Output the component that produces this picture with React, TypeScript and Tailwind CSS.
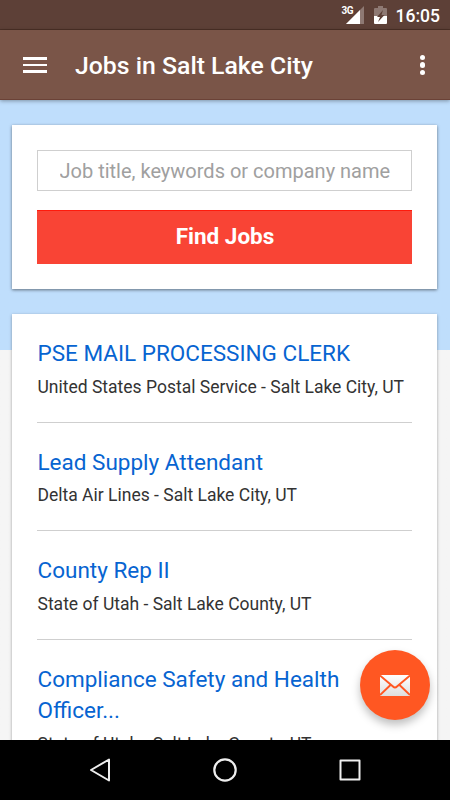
import { useState } from "react";

type Job = {
  title: string;
  company: string;
  location: string;
};

const jobs: Job[] = [
  { title: "PSE MAIL PROCESSING CLERK", company: "United States Postal Service", location: "Salt Lake City, UT" },
  { title: "Lead Supply Attendant", company: "Delta Air Lines", location: "Salt Lake City, UT" },
  { title: "County Rep II", company: "State of Utah", location: "Salt Lake County, UT" },
  { title: "Compliance Safety and Health Officer...", company: "State of Utah", location: "Salt Lake County, UT" },
];

function StatusBar() {
  return (
    <div className="flex h-[30px] shrink-0 items-center justify-end bg-[#5d4037] pr-[10px] text-white shadow-[inset_0_-1px_0_#4c3127]">
      <span className="mb-[8px] text-[10px] leading-none font-bold tracking-tighter">3G</span>
      <svg width="18" height="18" viewBox="0 0 18 18" className="-ml-[7.500px]">
        <path d="M18 0V18H0Z" fill="#fff" opacity="0.3" />
        <path d="M14 4V18H0Z" fill="#fff" />
      </svg>
      <svg width="13" height="18" viewBox="0 0 13 18" className="ml-[10px]">
        <path d="M4 0H9V2H12Q13 2 13 3V10H0V3Q0 2 1 2H4Z" fill="#fff" opacity="0.3" />
        <path d="M0 10H13V17Q13 18 12 18H1Q0 18 0 17Z" fill="#fff" />
        <path d="M9 4L3 11H6L4 16L10.500 9H7.500Z" fill="#5d4037" />
      </svg>
      <span className="ml-[9px] pt-[3px] text-[17.500px] leading-none font-medium">16:05</span>
    </div>
  );
}

function Header() {
  return (
    <header className="z-10 flex h-[70px] shrink-0 items-center bg-[#7a5548] pr-[25px] pl-[23px] text-white shadow-[inset_0_-1px_0_#6b4237,0_1px_4px_rgba(0,0,0,0.35)]">
      <button type="button" aria-label="Menu" className="flex w-6 flex-col gap-1">
        <span className="h-[2.500px] bg-white" />
        <span className="h-[2.500px] bg-white" />
        <span className="h-[2.500px] bg-white" />
      </button>
      <h1 className="ml-[28px] flex-1 pt-[2px] text-[24.800px] leading-none font-medium whitespace-nowrap">Jobs in Salt Lake City</h1>
      <button type="button" aria-label="More" className="flex flex-col gap-[2px]">
        <span className="size-[5.500px] rounded-full bg-white" />
        <span className="size-[5.500px] rounded-full bg-white" />
        <span className="size-[5.500px] rounded-full bg-white" />
      </button>
    </header>
  );
}

function SearchCard() {
  const [query, setQuery] = useState("");

  return (
    <form
      onSubmit={(e) => e.preventDefault()}
      className="flex h-[164px] flex-col bg-white px-[25px] pt-[25px] shadow-[0_1px_3px_rgba(0,0,0,0.5)]"
    >
      <input
        value={query}
        onChange={(e) => setQuery(e.target.value)}
        placeholder="Job title, keywords or company name"
        className="h-[41px] w-full border border-[#cfcfcf] pr-[18px] pl-[21.500px] text-[20px] text-[#333] outline-none placeholder:text-[#a0a0a0]"
      />
      <button type="submit" className="mt-[19px] h-[54px] w-full bg-[#f94435] pl-px text-[22.500px] font-bold text-white shadow-[inset_0_1px_0_#ff1a0c]">
        Find Jobs
      </button>
    </form>
  );
}

function JobRow({ job }: { job: Job }) {
  return (
    <li className="border-b border-[#cfcfcf] pt-6 pb-[21px]">
      <h2 className="pl-[0.500px] text-[22.500px] leading-[31.300px] text-[#0764d1]">{job.title}</h2>
      <p className="mt-[5.300px] mb-[0.500px] pl-[0.500px] text-[17.500px] leading-[25.500px] whitespace-nowrap text-[#333]">
        {job.company} - {job.location}
      </p>
    </li>
  );
}

function NavBar() {
  return (
    <nav className="z-10 flex h-[60px] shrink-0 items-center justify-center gap-[101px] bg-black">
      <svg width="24" height="24" viewBox="0 0 24 24" fill="none" stroke="#eee" strokeWidth="2" strokeLinejoin="round">
        <path d="M21 1.500V22.500L3 12Z" />
      </svg>
      <svg width="24" height="24" viewBox="0 0 24 24" fill="none" stroke="#eee" strokeWidth="2.200">
        <circle cx="12" cy="12" r="10.700" />
      </svg>
      <svg width="24" height="24" viewBox="0 0 24 24" fill="none" stroke="#eee" strokeWidth="2" strokeLinejoin="round">
        <rect x="2.500" y="2.500" width="19" height="19" />
      </svg>
    </nav>
  );
}

export default function App() {
  return (
    <div className="relative flex h-[800px] w-[450px] flex-col overflow-hidden bg-[#f5f5f5] font-['Roboto',sans-serif]">
      <StatusBar />
      <Header />
      <main className="min-h-0 flex-1 overflow-hidden bg-linear-to-b from-[#bfdefc] from-[250px] to-[#f5f5f5] to-[250px] pr-[13px] pl-[12px] pt-[25px]">
        <SearchCard />
        <ul className="mt-[25px] bg-white px-[25px] shadow-[0_1px_3px_rgba(0,0,0,0.35)]">
          {jobs.map((job) => (
            <JobRow key={job.title} job={job} />
          ))}
        </ul>
      </main>
      <button
        type="button"
        aria-label="Email"
        className="absolute right-[20px] bottom-[80px] flex size-[70px] items-center justify-center rounded-full bg-[#ff5722] shadow-[0_5px_9px_rgba(0,0,0,0.25)]"
      >
        <svg width="30" height="21" viewBox="0 0 30 21">
          <defs>
            <linearGradient id="paper" x1="0" y1="0" x2="0" y2="1">
              <stop offset="0" stopColor="#fff" />
              <stop offset="1" stopColor="#dedede" />
            </linearGradient>
          </defs>
          <rect width="30" height="21" rx="0.500" fill="url(#paper)" />
          <path d="M0 0.500L13 11.500Q15 13.500 17 11.500L30 0.500M0 20L10.500 10M30 20L19.500 10" fill="none" stroke="#ff5722" strokeWidth="1.900" />
        </svg>
      </button>
      <NavBar />
    </div>
  );
}
